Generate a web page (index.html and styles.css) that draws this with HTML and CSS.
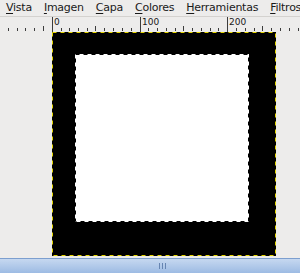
FILE: index.html
```html
<!DOCTYPE html>
<html>
<head lang="es">
    <meta charset="UTF-8">
    <title>GIMP</title>
    <link rel="stylesheet" href="styles.css">
</head>
<body>
   <div id="window">
       <ul id="menubar">
           <li><u>V</u>ista</li>
           <li><u>I</u>magen</li>
           <li><u>C</u>apa</li>
           <li><u>C</u>olores</li>
           <li><u>H</u>erramientas</li>
           <li><u>F</u>iltros</li>
       </ul>
       <div id="ruler">
           <svg width="300" height="15" viewBox="0 0 300 15">
               <g stroke="#3c3c3c" stroke-width="1">
                   <line x1="8.5" y1="11" x2="8.5" y2="14"/>
                   <line x1="17.5" y1="11" x2="17.5" y2="14"/>
                   <line x1="25.5" y1="11" x2="25.5" y2="14"/>
                   <line x1="34.5" y1="11" x2="34.5" y2="14"/>
                   <line x1="43.5" y1="9" x2="43.5" y2="14"/>
                   <line x1="52.5" y1="0" x2="52.5" y2="15"/>
                   <line x1="61.5" y1="11" x2="61.5" y2="14"/>
                   <line x1="69.5" y1="11" x2="69.5" y2="14"/>
                   <line x1="78.5" y1="11" x2="78.5" y2="14"/>
                   <line x1="87.5" y1="11" x2="87.5" y2="14"/>
                   <line x1="95.5" y1="9" x2="95.5" y2="14"/>
                   <line x1="104.5" y1="11" x2="104.5" y2="14"/>
                   <line x1="113.5" y1="11" x2="113.5" y2="14"/>
                   <line x1="122.5" y1="11" x2="122.5" y2="14"/>
                   <line x1="131.5" y1="11" x2="131.5" y2="14"/>
                   <line x1="140.5" y1="0" x2="140.5" y2="15"/>
                   <line x1="148.5" y1="11" x2="148.5" y2="14"/>
                   <line x1="157.5" y1="11" x2="157.5" y2="14"/>
                   <line x1="166.5" y1="11" x2="166.5" y2="14"/>
                   <line x1="175.5" y1="11" x2="175.5" y2="14"/>
                   <line x1="183.5" y1="9" x2="183.5" y2="14"/>
                   <line x1="192.5" y1="11" x2="192.5" y2="14"/>
                   <line x1="201.5" y1="11" x2="201.5" y2="14"/>
                   <line x1="210.5" y1="11" x2="210.5" y2="14"/>
                   <line x1="218.5" y1="11" x2="218.5" y2="14"/>
                   <line x1="227.5" y1="0" x2="227.5" y2="15"/>
                   <line x1="236.5" y1="11" x2="236.5" y2="14"/>
                   <line x1="245.5" y1="11" x2="245.5" y2="14"/>
                   <line x1="254.5" y1="11" x2="254.5" y2="14"/>
                   <line x1="262.5" y1="9" x2="262.5" y2="14"/>
                   <line x1="271.5" y1="11" x2="271.5" y2="14"/>
                   <line x1="280.5" y1="11" x2="280.5" y2="14"/>
                   <line x1="289.5" y1="11" x2="289.5" y2="14"/>
                   <line x1="298.5" y1="11" x2="298.5" y2="14"/>
               </g>
           </svg>
           <span class="label" id="l0">0</span>
           <span class="label" id="l100">100</span>
           <span class="label" id="l200">200</span>
       </div>
       <div id="viewport">
           <svg id="canvas" width="224" height="224" viewBox="0 0 224 224">
               <rect x="0" y="0" width="224" height="224" fill="#000"/>
               <rect x="0.5" y="0.5" width="223" height="223" fill="none" stroke="#e3d400" stroke-width="1" stroke-dasharray="4 4"/>
               <rect x="23" y="22" width="174" height="168" fill="#fff"/>
               <rect x="23.5" y="22.5" width="173" height="167" fill="none" stroke="#000" stroke-width="1" stroke-dasharray="4 4"/>
           </svg>
       </div>
       <div id="scrollbar">
           <span class="grip"></span>
       </div>
   </div>
</body>
</html>
```
FILE: styles.css
```css
*{
    padding: 0;
    margin: 0;
}
ul{
    list-style: none;
}
body{
    background: #edeceb;
    font-family: "DejaVu Sans", sans-serif;
    overflow: hidden;
}
#window{
    width: 300px;
    height: 273px;
    display: flex;
    flex-direction: column;
}
#menubar{
    height: 17px;
    display: flex;
    gap: 12px;
    padding-left: 6px;
    font-size: 11px;
    letter-spacing: -0.25px;
    line-height: 16px;
    color: #1a1a1a;
    white-space: nowrap;
    border-bottom: 1px solid #d4d2cf;
}
#menubar u{
    text-decoration-thickness: 1px;
    text-underline-offset: 2px;
}
#ruler{
    height: 15px;
    position: relative;
    background: #edeceb;
}
#ruler svg{
    display: block;
}
#ruler .label{
    position: absolute;
    top: 0;
    font-size: 9px;
    line-height: 10px;
    color: #1a1a1a;
}
#l0{
    left: 54px;
}
#l100{
    left: 142px;
}
#l200{
    left: 229px;
}
#viewport{
    height: 224px;
    padding-left: 52px;
}
#canvas{
    display: block;
}
#scrollbar{
    margin-top: 2px;
    height: 15px;
    border-top: 1px solid #7d9fcf;
    background: linear-gradient(#c6d8f0, #9dbbe3);
    display: flex;
    justify-content: center;
    align-items: center;
}
#scrollbar .grip{
    width: 7px;
    height: 6px;
    margin-left: 24px;
    background: repeating-linear-gradient(90deg, #6685b2 0 1px, transparent 1px 3px);
}
```
